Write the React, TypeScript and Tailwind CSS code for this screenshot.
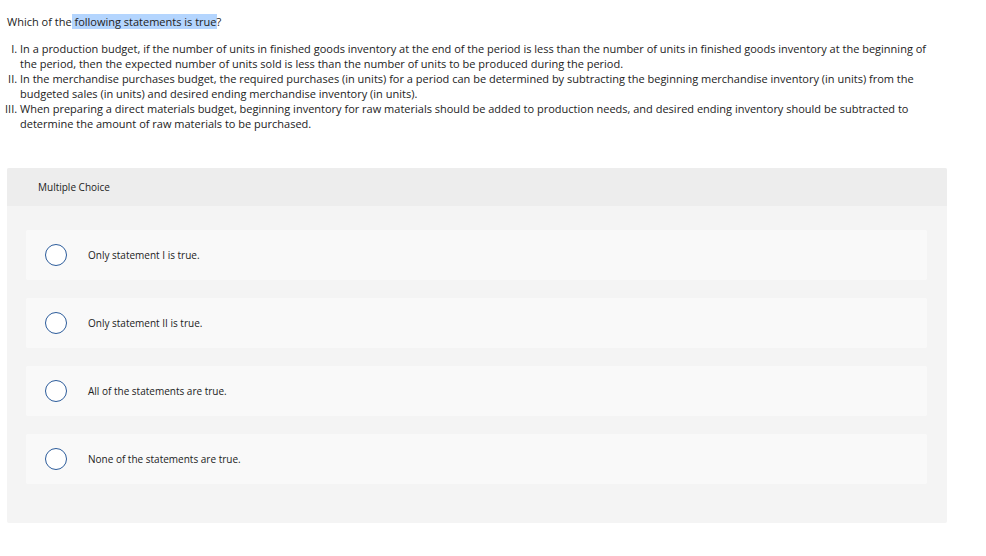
const options = [
  "Only statement I is true.",
  "Only statement II is true.",
  "All of the statements are true.",
  "None of the statements are true.",
];

export default function App() {
  return (
    <div className="min-h-screen bg-white text-[#222] font-['Open_Sans',sans-serif]">
      <div className="pt-[14px] pl-[7px] pr-[46px] text-[11px] leading-[15px]">
        <p>
          Which of the
          <span className="bg-[#b4d5fe]"> following statements is true</span>?
        </p>
        <ol className="mt-[12px] pl-[13px] list-[upper-roman]">
          <li>
            In a production budget, if the number of units in finished goods inventory at the end of the period is less
            than the number of units in finished goods inventory at the beginning of the period, then the expected
            number of units sold is less than the number of units to be produced during the period.
          </li>
          <li>
            In the merchandise purchases budget, the required purchases (in units) for a period can be determined by
            subtracting the beginning merchandise inventory (in units) from the budgeted sales (in units) and desired
            ending merchandise inventory (in units).
          </li>
          <li>
            When preparing a direct materials budget, beginning inventory for raw materials should be added to
            production needs, and desired ending inventory should be subtracted to determine the amount of raw
            materials to be purchased.
          </li>
        </ol>
      </div>

      <div className="mt-[37px] ml-[7px] w-[940px] rounded-[2px] bg-[#f4f4f4] overflow-hidden">
        <div className="h-[38px] bg-[#ededed] flex items-center pl-[31px] text-[10px]">Multiple Choice</div>
        <div className="pl-[19px] pr-[20px] pt-[24px] pb-[39px] flex flex-col gap-[18px]">
          {options.map((o) => (
            <div key={o} className="h-[50px] rounded-[2px] bg-[#f9f9f9] flex items-center">
              <span className="ml-[19px] w-[22px] h-[22px] rounded-full border-[1.5px] border-[#2c5c9b] bg-white" />
              <span className="ml-[21px] text-[10px]">{o}</span>
            </div>
          ))}
        </div>
      </div>
    </div>
  );
}
